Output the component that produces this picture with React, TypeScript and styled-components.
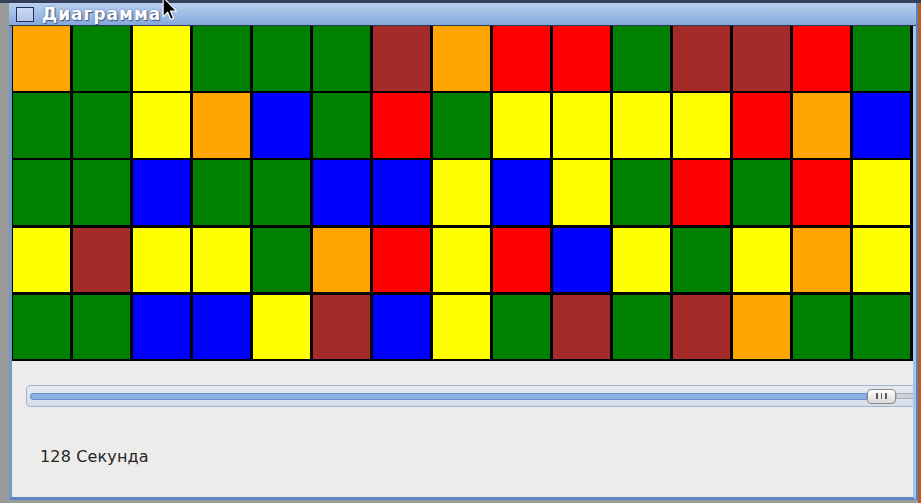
import React from "react";
import styled, { createGlobalStyle } from "styled-components";

const GlobalStyle = createGlobalStyle`
  html, body {
    margin: 0;
    padding: 0;
  }
  body {
    width: 921px;
    height: 503px;
    overflow: hidden;
    font-family: "DejaVu Sans", "Liberation Sans", sans-serif;
  }
`;

const colors: Record<string, string> = {
  O: "#ffa500",
  G: "#008000",
  Y: "#ffff00",
  B: "#0000ff",
  R: "#ff0000",
  K: "#a52a2a",
};

const rows = [
  "OGYGGGKORRGKKRGR",
  "GGYOBGRGYYYYROBG",
  "GGBGGBBYBYGRGRYR",
  "YKYYGORYRBYGYOYB",
  "GGBBYKBYGKGKOGGY",
];

const Desktop = styled.div`
  position: relative;
  width: 921px;
  height: 503px;
  padding: 3px 0 0 9px;
  box-sizing: border-box;
  background:
    linear-gradient(#34405a 0 3px, transparent 3px),
    linear-gradient(90deg, #9a9a9a 0 918px, #bb5a22 918px);
`;

const Window = styled.div`
  width: 907px;
  height: 497px;
  display: flex;
  flex-direction: column;
  box-shadow: 2px 0 0 0 #5a80c0;
`;

const TitleBar = styled.div`
  height: 22px;
  display: flex;
  align-items: center;
  gap: 8px;
  padding-left: 7px;
  background: linear-gradient(#b9cfee, #9dbbe6 55%, #85a8dc);
  border-bottom: 1px solid #2c3a50;
`;

const TitleIcon = styled.div`
  width: 16px;
  height: 13px;
  border: 1px solid #1f2d5c;
  outline: 1px dotted #c6d4ee;
  outline-offset: -2px;
  background: linear-gradient(#cbdaf2, #aec4e8);
`;

const TitleText = styled.span`
  color: #ffffff;
  font-weight: bold;
  font-size: 17px;
  letter-spacing: 1px;
  text-shadow: 1px 1px 1px #3f5680, 0 0 2px #5872a0;
`;

const Body = styled.div`
  flex: 1;
  display: flex;
  flex-direction: column;
  border-left: 3px solid #7397cf;
  border-right: 3px solid #a6c3ec;
  border-bottom: 3px solid #5d85c4;
  overflow: hidden;
`;

const Board = styled.div`
  display: grid;
  grid-template-columns: repeat(16, 57.5px);
  grid-template-rows: repeat(5, 64.7px);
  column-gap: 2.5px;
  row-gap: 2.5px;
  padding: 0 0 2px 0.5px;
  background: #000;
  overflow: hidden;
`;

const Cell = styled.div<{ $c: string }>`
  background: ${(p) => p.$c};
`;

const Panel = styled.div`
  flex: 1;
  background: #edecea;
  display: flex;
  flex-direction: column;
  padding: 24px 0 0 14px;
`;

const Groove = styled.div`
  height: 20px;
  margin-right: -12px;
  display: flex;
  align-items: center;
  padding: 0 3px;
  border: 1px solid #a4b4cb;
  border-radius: 4px;
  background: linear-gradient(#e4e9f1, #d6dee9);
`;

const FilledTrack = styled.div`
  width: 835px;
  height: 5px;
  border: 1px solid #6b91c8;
  border-radius: 3px 0 0 3px;
  background: #8db1e2;
`;

const EmptyTrack = styled.div`
  flex: 1;
  height: 4px;
  border: 1px solid #a9b0ba;
  background: #cdd2d8;
`;

const Thumb = styled.div`
  width: 27px;
  height: 13px;
  flex-shrink: 0;
  display: flex;
  align-items: center;
  justify-content: center;
  gap: 3px;
  border: 1px solid #8c8c8c;
  border-radius: 4px;
  background: linear-gradient(#ffffff, #e8e8e8 60%, #d8d8d8);
`;

const Grip = styled.span`
  width: 1.5px;
  height: 6px;
  background: #5a5a5a;
`;

const Caption = styled.div`
  margin: 40px 0 0 14px;
  font-size: 16px;
  line-height: 20px;
  letter-spacing: 0.15px;
  color: #262626;
`;

const Cursor = styled.svg`
  position: absolute;
  left: 158px;
  top: -4px;
`;

export default function App() {
  return (
    <>
      <GlobalStyle />
      <Desktop>
        <Window>
          <TitleBar>
            <TitleIcon />
            <TitleText>Диаграмма</TitleText>
          </TitleBar>
          <Body>
            <Board>
              {rows.map((row, r) =>
                row.split("").map((k, i) => <Cell key={r + "-" + i} $c={colors[k]} />)
              )}
            </Board>
            <Panel>
              <Groove>
                <FilledTrack />
                <Thumb>
                  <Grip />
                  <Grip />
                  <Grip />
                </Thumb>
                <EmptyTrack />
              </Groove>
              <Caption>128 Секунда</Caption>
            </Panel>
          </Body>
        </Window>
        <Cursor width="24" height="26" viewBox="0 0 12 19">
          <path d="M1 1 L1 15 L4.3 11.8 L6.6 17.2 L8.6 16.3 L6.3 11 L10.8 11 Z" fill="#000" stroke="#fff" strokeWidth="0.8" strokeLinejoin="round" />
        </Cursor>
      </Desktop>
    </>
  );
}
